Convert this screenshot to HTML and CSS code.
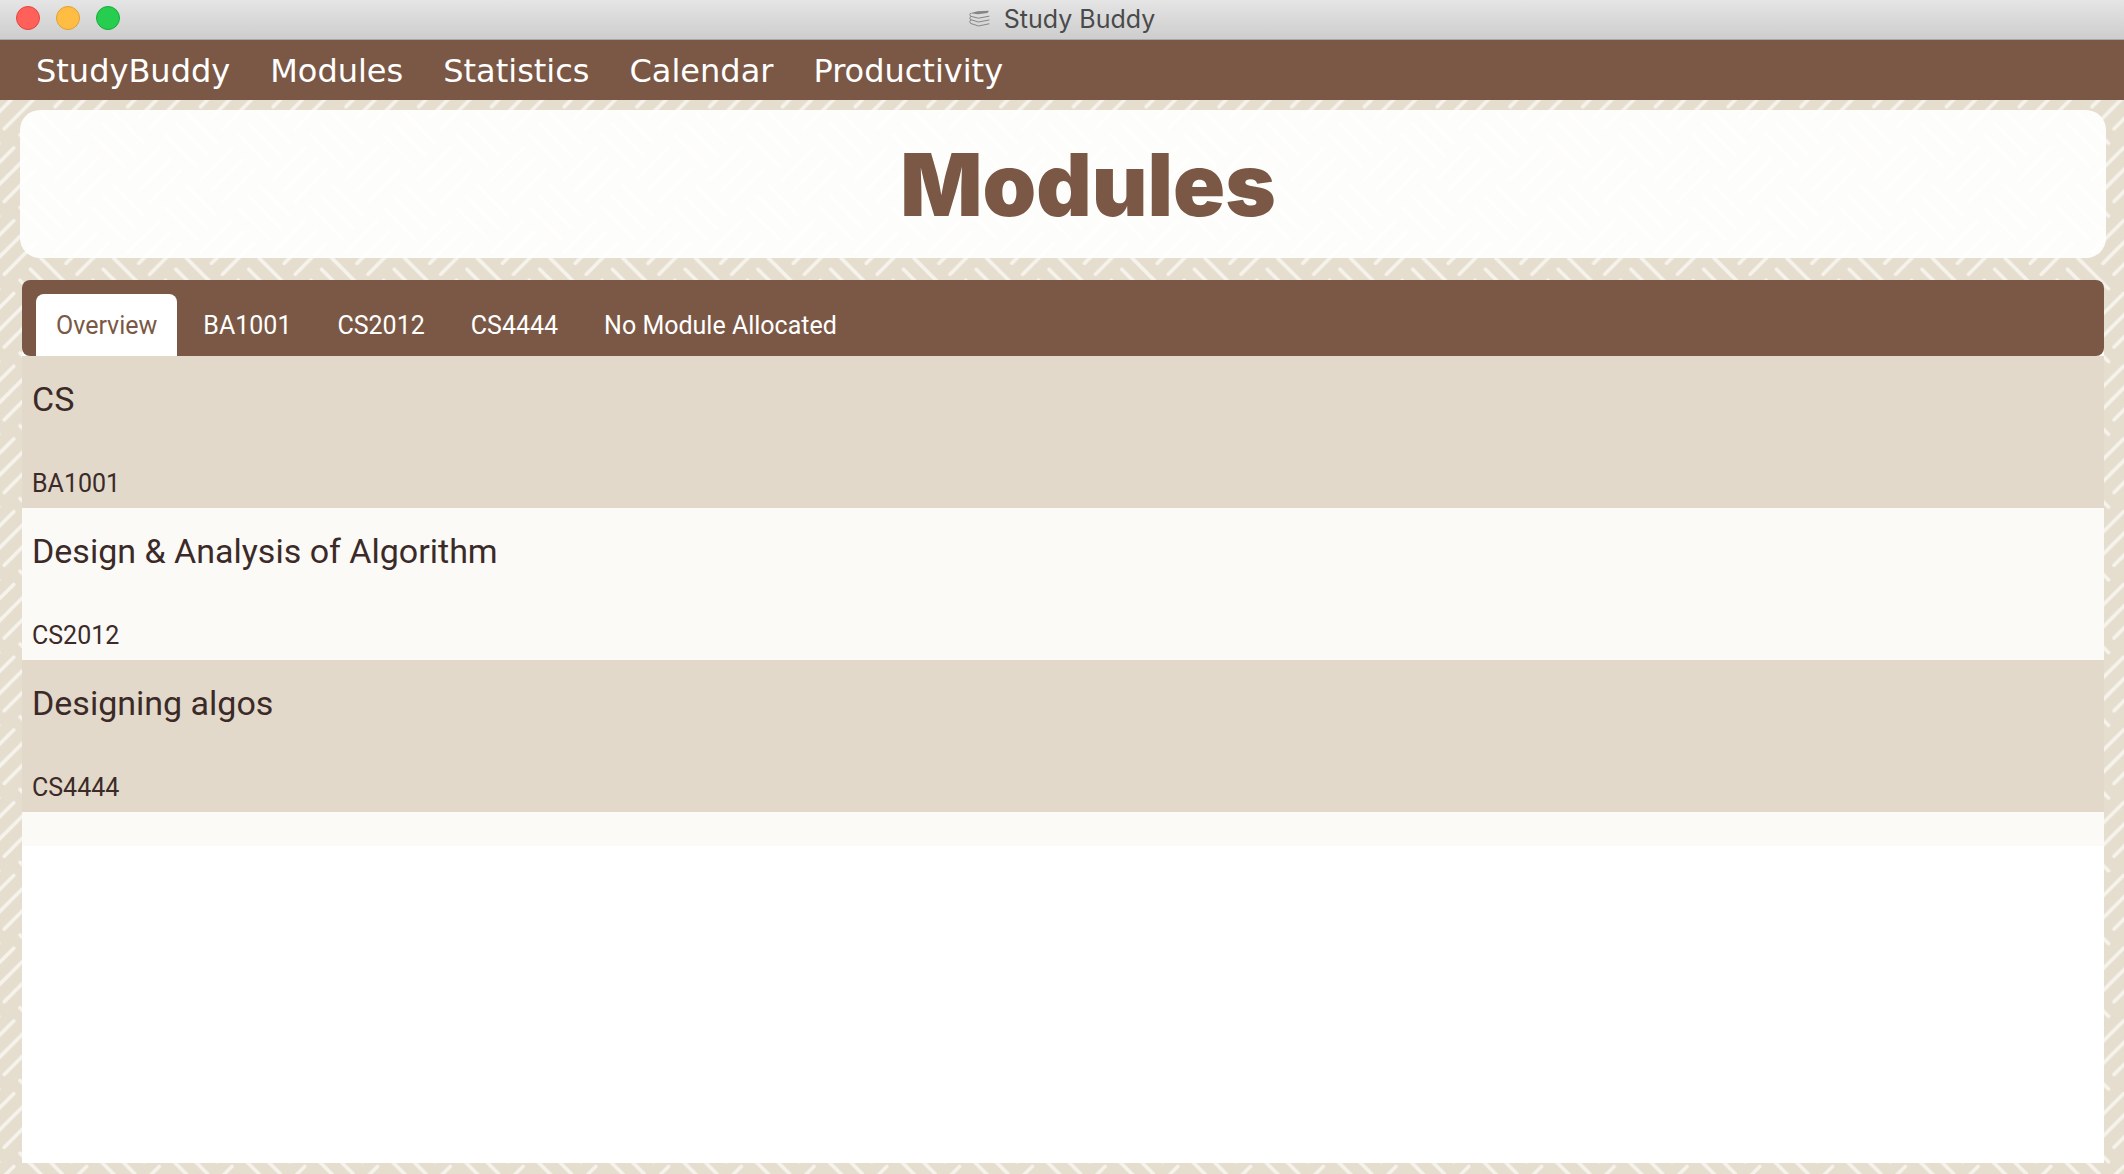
FILE: index.html
```html
<!DOCTYPE html>
<html lang="en">
<head>
<meta charset="utf-8">
<title>Study Buddy</title>
<link rel="stylesheet" href="styles.css">
</head>
<body>
<div class="window">
  <header class="titlebar">
    <div class="controls">
      <button class="control close" type="button" aria-label="Close"></button>
      <button class="control minimize" type="button" aria-label="Minimize"></button>
      <button class="control maximize" type="button" aria-label="Maximize"></button>
    </div>
    <div class="caption">
      <svg class="books" viewBox="0 0 21 18" aria-hidden="true">
        <path d="M1 3.200 8.500 1.200 20 .8 18.500 3 9 4.200Z" fill="#858585"/>
        <g fill="none" stroke="#858585" stroke-width="1" stroke-linecap="round" stroke-linejoin="round">
          <path d="M1.500 3.200Q0 4.800 1.500 6.200L9.500 8.200 20 6.200"/>
          <path d="M1.500 6.600Q0 8.400 1.500 9.600L9.500 12 20 10"/>
          <path d="M1.500 10Q0 12 1.500 13.400L9.500 16 20 13.800"/>
        </g>
      </svg>
      <span>Study Buddy</span>
    </div>
  </header>

  <nav class="menu" aria-label="Main">
    <a href="#studybuddy">StudyBuddy</a>
    <a href="#modules">Modules</a>
    <a href="#statistics">Statistics</a>
    <a href="#calendar">Calendar</a>
    <a href="#productivity">Productivity</a>
  </nav>

  <main class="content">
    <svg class="weave" aria-hidden="true">
      <defs>
        <g id="strokes">
          <path d="M55 34 86.500 2.500M66 45 97.500 13.500M77 56 108.500 24.500M41 40 71.500 70.500M30.500 51 62 82.500M20 62 51.500 93.500"/>
        </g>
        <pattern id="weave" width="72.750" height="72.750" patternUnits="userSpaceOnUse" patternTransform="translate(0 -27.250)">
          <g fill="none" stroke="#f6f3ec" stroke-width="3.600" stroke-linecap="round">
            <use href="#strokes"/>
            <use href="#strokes" x="-72.750"/>
            <use href="#strokes" y="-72.750"/>
            <use href="#strokes" x="-72.750" y="-72.750"/>
          </g>
        </pattern>
      </defs>
      <rect width="100%" height="100%" fill="url(#weave)"/>
    </svg>

    <section class="banner">
      <h1>Modules</h1>
    </section>

    <section class="panel">
      <div class="tabs" role="tablist">
        <button class="tab selected" type="button" role="tab" aria-selected="true">Overview</button>
        <button class="tab" type="button" role="tab" aria-selected="false">BA1001</button>
        <button class="tab" type="button" role="tab" aria-selected="false">CS2012</button>
        <button class="tab" type="button" role="tab" aria-selected="false">CS4444</button>
        <button class="tab" type="button" role="tab" aria-selected="false">No Module Allocated</button>
      </div>
      <ul class="modules">
        <li class="module">
          <h2>CS</h2>
          <p>BA1001</p>
        </li>
        <li class="module">
          <h2>Design &amp; Analysis of Algorithm</h2>
          <p>CS2012</p>
        </li>
        <li class="module">
          <h2>Designing algos</h2>
          <p>CS4444</p>
        </li>
        <li class="module empty" aria-hidden="true"></li>
      </ul>
    </section>
  </main>
</div>
</body>
</html>
```
FILE: styles.css
```css
* {
  box-sizing: border-box;
}

body {
  margin: 0;
  font-family: Roboto, "Liberation Sans", sans-serif;
  font-size: 25px;
  color: #3b2a28;
  background: #e5decf;
}

button {
  border: 0;
  padding: 0;
  font: inherit;
}

.window {
  display: flex;
  flex-direction: column;
  min-height: 100vh;
}

/* Title bar */
.titlebar {
  display: grid;
  grid-template-columns: 1fr auto 1fr;
  align-items: center;
  height: 40px;
  padding: 0 16px;
  background: linear-gradient(#e5e5e5, #cdcdcd);
  border-bottom: 1px solid #a9a9a9;
}

.controls {
  display: flex;
  gap: 16px;
  padding-bottom: 3px;
}

.control {
  width: 24px;
  height: 24px;
  border-radius: 50%;
}

.close {
  background: #ff605a;
  border: 1px solid #e2463f;
}

.minimize {
  background: #ffbe43;
  border: 1px solid #e0a033;
}

.maximize {
  background: #27cd4f;
  border: 1px solid #15ad37;
}

.caption {
  display: flex;
  align-items: center;
  gap: 14px;
  padding-bottom: 2px;
  line-height: 32px;
  font-family: Inter, sans-serif;
  color: #4a4a4a;
}

.books {
  width: 21px;
  height: 18px;
}

/* Main menu */
.menu {
  display: flex;
  align-items: center;
  gap: 40px;
  height: 60px;
  padding: 2px 36px 0;
  background: #7b5845;
  font-family: "DejaVu Sans", Verdana, sans-serif;
  font-size: 32px;
  line-height: 40px;
}

.menu a {
  color: #fff;
  text-decoration: none;
}

/* Page */
.content {
  position: relative;
  flex: 1;
  display: flex;
  flex-direction: column;
  gap: 22px;
  padding: 10px 18px 11px 20px;
}

.weave {
  position: absolute;
  inset: 0;
  width: 100%;
  height: 100%;
}

.banner {
  position: relative;
  display: flex;
  align-items: center;
  justify-content: center;
  height: 148px;
  padding: 2px 0 0 50px;
  border-radius: 20px;
  background: rgba(255, 255, 254, 0.93);
}

.banner h1 {
  margin: 0;
  font-family: Inter, sans-serif;
  font-size: 86px;
  font-weight: 900;
  line-height: 100px;
  color: #7b5845;
}

.panel {
  position: relative;
  flex: 1;
  display: flex;
  flex-direction: column;
  margin: 0 2px;
  background: #fff;
  border-radius: 8px 8px 0 0;
}

.tabs {
  display: flex;
  align-items: flex-end;
  gap: 6px;
  height: 76px;
  padding: 0 14px;
  border-radius: 8px;
  background: #7b5845;
}

.tab {
  height: 62px;
  padding: 0 20px;
  border-radius: 8px 8px 0 0;
  background: none;
  color: #fff;
}

.tab.selected {
  background: #fff;
  color: #7b5845;
}

/* Module list */
.modules {
  margin: 0;
  padding: 0;
  list-style: none;
}

.module {
  display: flex;
  flex-direction: column;
  justify-content: space-between;
  min-height: 152px;
  padding: 20px 10px 8px;
  background: #e2d9ca;
}

.module:nth-child(even) {
  background: #fbfaf6;
}

.module.empty {
  min-height: 34px;
  padding: 0;
}

.module h2 {
  margin: 0;
  font-size: 34px;
  font-weight: 400;
  line-height: 46px;
}

.module p {
  margin: 0;
  line-height: 32px;
}
```
